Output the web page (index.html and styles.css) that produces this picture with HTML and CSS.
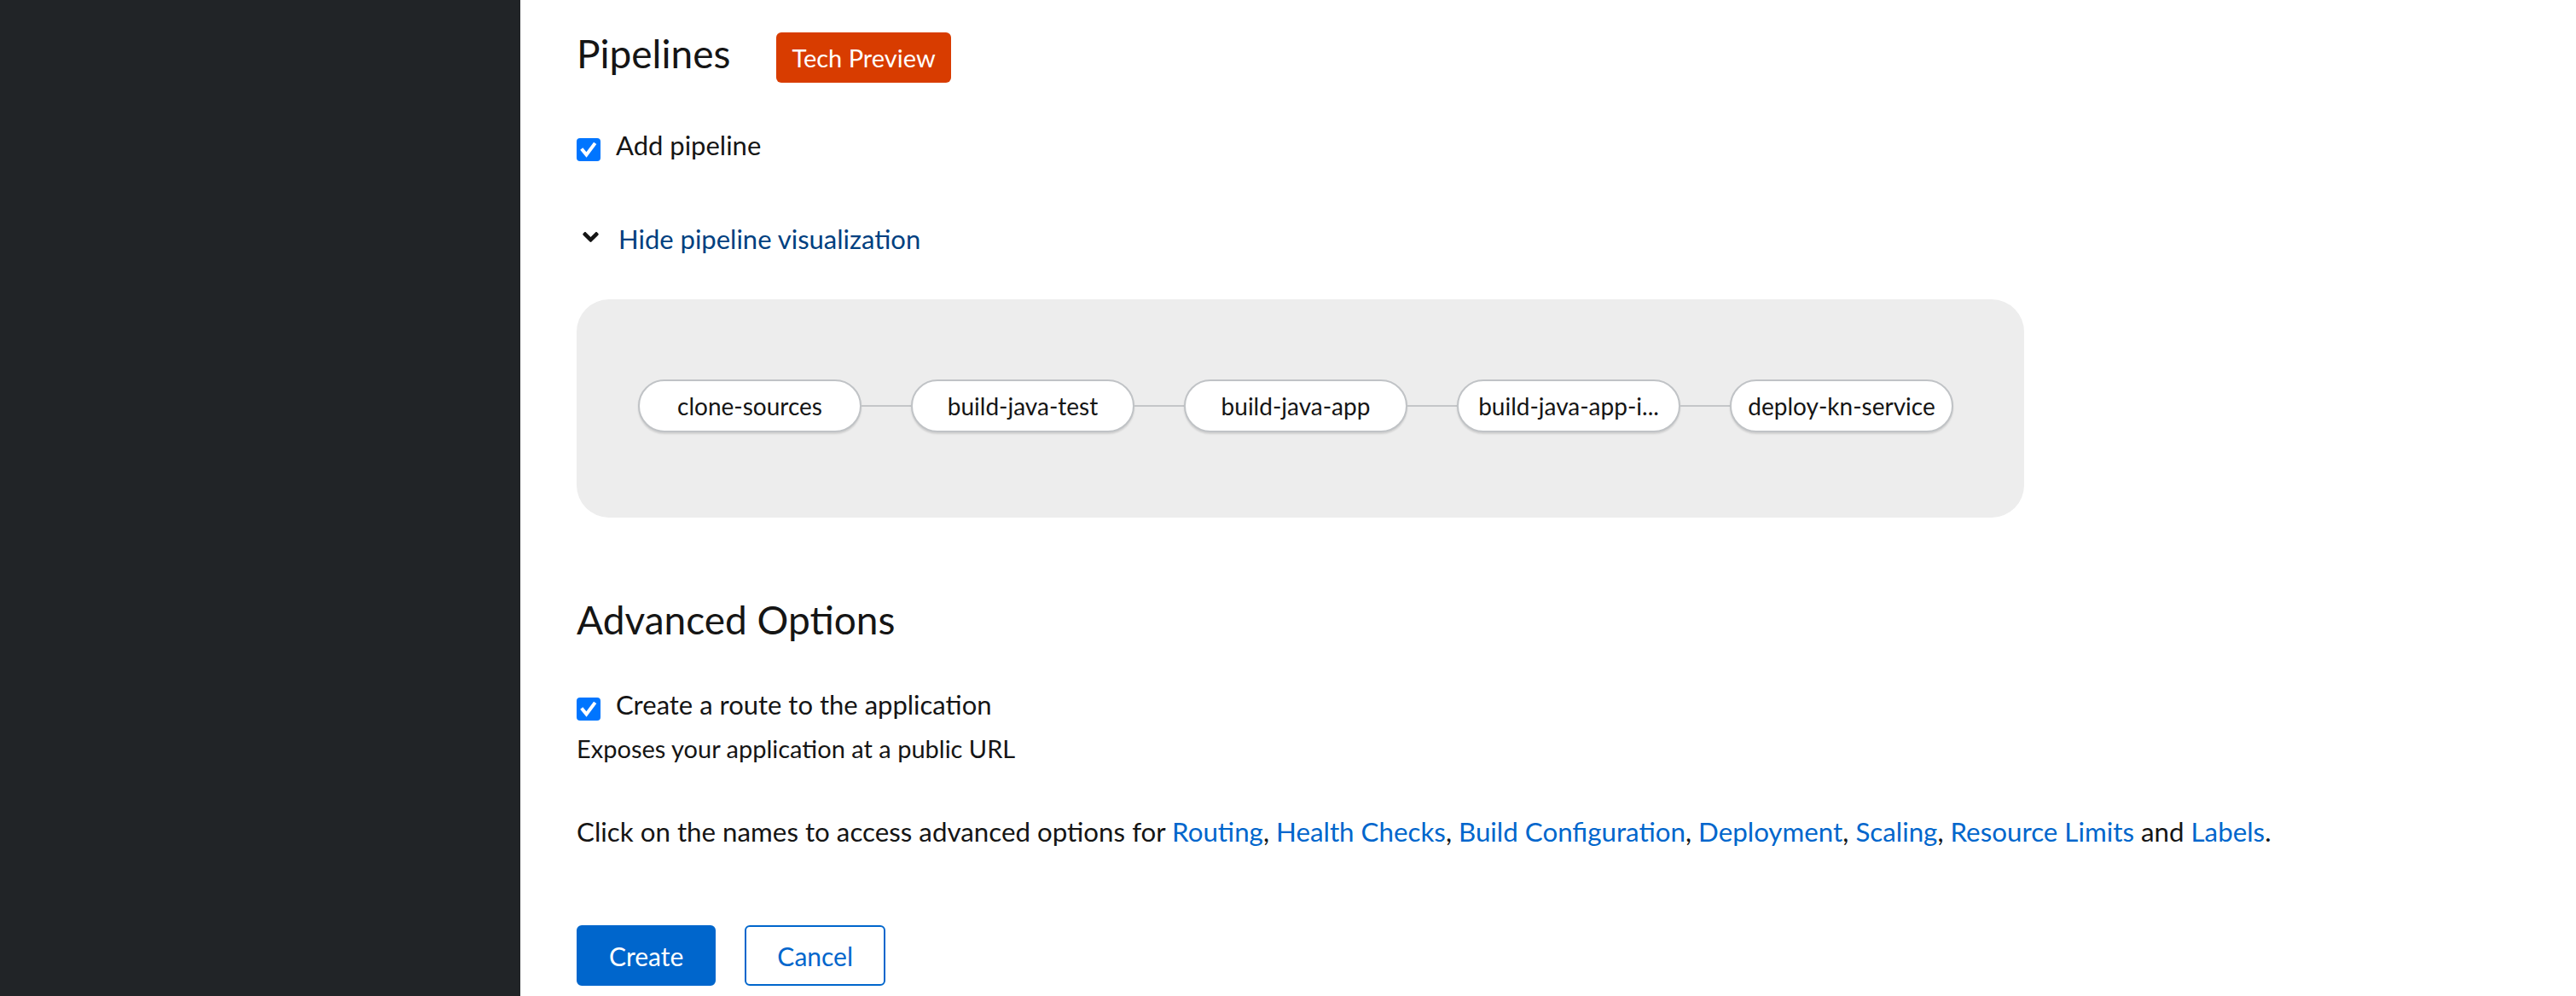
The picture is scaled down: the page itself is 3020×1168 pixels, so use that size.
FILE: index.html
```html
<!DOCTYPE html>
<html lang="en">
<head>
<meta charset="utf-8">
<title>Pipelines</title>
<link rel="stylesheet" href="styles.css">
</head>
<body>
<div class="page">
  <aside class="sidebar"></aside>
  <main class="content">
    <div class="title-row">
      <h2 class="title">Pipelines</h2>
      <span class="badge">Tech Preview</span>
    </div>

    <div class="check-row add-row">
      <span class="checkbox"><svg viewBox="0 0 28 27" width="28" height="27"><path d="M7 14 L11.5 19.5 L20.5 7.5" fill="none" stroke="#fff" stroke-width="4" stroke-linecap="square"/></svg></span>
      <span class="check-label">Add pipeline</span>
    </div>

    <div class="toggle-row">
      <svg class="chevron" viewBox="0 152 320 208" width="19" height="12"><path d="M143 352.3L7 216.3c-9.4-9.4-9.4-24.6 0-33.9l22.6-22.6c9.4-9.4 24.6-9.4 33.9 0l96.4 96.4 96.4-96.4c9.4-9.4 24.6-9.4 33.9 0l22.6 22.6c9.4 9.4 9.4 24.6 0 33.9l-136 136c-9.2 9.4-24.4 9.4-33.8 0z" fill="#151515"/></svg>
      <span class="toggle-text">Hide pipeline visualization</span>
    </div>

    <div class="viz">
      <div class="node">clone-sources</div>
      <div class="edge"></div>
      <div class="node">build-java-test</div>
      <div class="edge"></div>
      <div class="node">build-java-app</div>
      <div class="edge"></div>
      <div class="node">build-java-app-i...</div>
      <div class="edge"></div>
      <div class="node">deploy-kn-service</div>
    </div>

    <h2 class="title adv">Advanced Options</h2>

    <div class="check-row route-row">
      <span class="checkbox"><svg viewBox="0 0 28 27" width="28" height="27"><path d="M7 14 L11.5 19.5 L20.5 7.5" fill="none" stroke="#fff" stroke-width="4" stroke-linecap="square"/></svg></span>
      <span class="check-label">Create a route to the application</span>
    </div>
    <p class="helper">Exposes your application at a public URL</p>

    <p class="info">Click on the names to access advanced options for <a class="link">Routing</a>, <a class="link">Health Checks</a>, <a class="link">Build Configuration</a>, <a class="link">Deployment</a>, <a class="link">Scaling</a>, <a class="link">Resource Limits</a> and <a class="link">Labels</a>.</p>

    <div class="actions">
      <button class="btn primary">Create</button>
      <button class="btn secondary">Cancel</button>
    </div>
  </main>
</div>
</body>
</html>
```

FILE: styles.css
```css
html, body {
  margin: 0;
  padding: 0;
  background: #ffffff;
}

body {
  font-family: "Lato", "Liberation Sans", sans-serif;
  color: #151515;
}

.page {
  display: flex;
  min-height: 1168px;
}

.sidebar {
  width: 610px;
  flex: 0 0 610px;
  background: #212427;
}

.content {
  flex: 1;
  padding-left: 66px;
  display: flex;
  flex-direction: column;
  align-items: flex-start;
}

.title-row {
  display: flex;
  align-items: flex-start;
  gap: 54px;
  padding-top: 37px;
}

.title {
  margin: 0;
  font-size: 46px;
  line-height: 52px;
  font-weight: 400;
  color: #151515;
}

.badge {
  margin-top: 1px;
  height: 59px;
  line-height: 59px;
  padding: 0 18px;
  background: #d83c00;
  color: #ffffff;
  border-radius: 6px;
  font-size: 29px;
}

.check-row {
  display: flex;
  align-items: flex-start;
  gap: 18px;
}

.add-row {
  margin-top: 54px;
}

.checkbox {
  width: 28px;
  height: 27px;
  margin-top: 11px;
  background: #0075ff;
  border-radius: 4px;
  display: flex;
}

.check-label {
  font-size: 31px;
  line-height: 40px;
  margin-top: -1px;
}

.toggle-row {
  margin-top: 70px;
  display: flex;
  align-items: flex-start;
}

.chevron {
  margin-left: 7px;
  margin-top: 12px;
}

.toggle-text {
  margin-left: 23px;
  font-size: 31px;
  line-height: 40px;
  color: #004080;
}

.viz {
  margin-top: 51px;
  width: 1697px;
  height: 256px;
  box-sizing: border-box;
  padding-left: 72px;
  padding-bottom: 6px;
  border-radius: 38px;
  background: #ededed;
  display: flex;
  align-items: center;
}

.node {
  width: 262px;
  height: 62px;
  box-sizing: border-box;
  border: 2px solid #c0c3c6;
  border-radius: 31px;
  background: #ffffff;
  display: flex;
  align-items: center;
  justify-content: center;
  font-size: 28px;
  color: #151515;
  box-shadow: 0 2px 2px rgba(0, 0, 0, 0.12);
}

.edge {
  width: 58px;
  height: 2px;
  background: #c4c6c8;
}

.adv {
  margin-top: 94px;
}

.route-row {
  margin-top: 54px;
}

.helper {
  margin: 14px 0 0;
  font-size: 29px;
  line-height: 36px;
}

.info {
  margin: 59px 0 0;
  font-size: 31.3px;
  line-height: 40px;
}

.link {
  color: #0066cc;
  text-decoration: none;
}

.actions {
  margin-top: 90px;
  display: flex;
  gap: 34px;
}

.btn {
  height: 71px;
  padding: 0 36px;
  font-family: "Lato", "Liberation Sans", sans-serif;
  font-size: 30px;
  border-radius: 6px;
  box-sizing: border-box;
  cursor: pointer;
}

.primary {
  background: #0066cc;
  color: #ffffff;
  border: 2px solid #0066cc;
}

.secondary {
  background: #ffffff;
  color: #0066cc;
  border: 2px solid #0066cc;
}
```
